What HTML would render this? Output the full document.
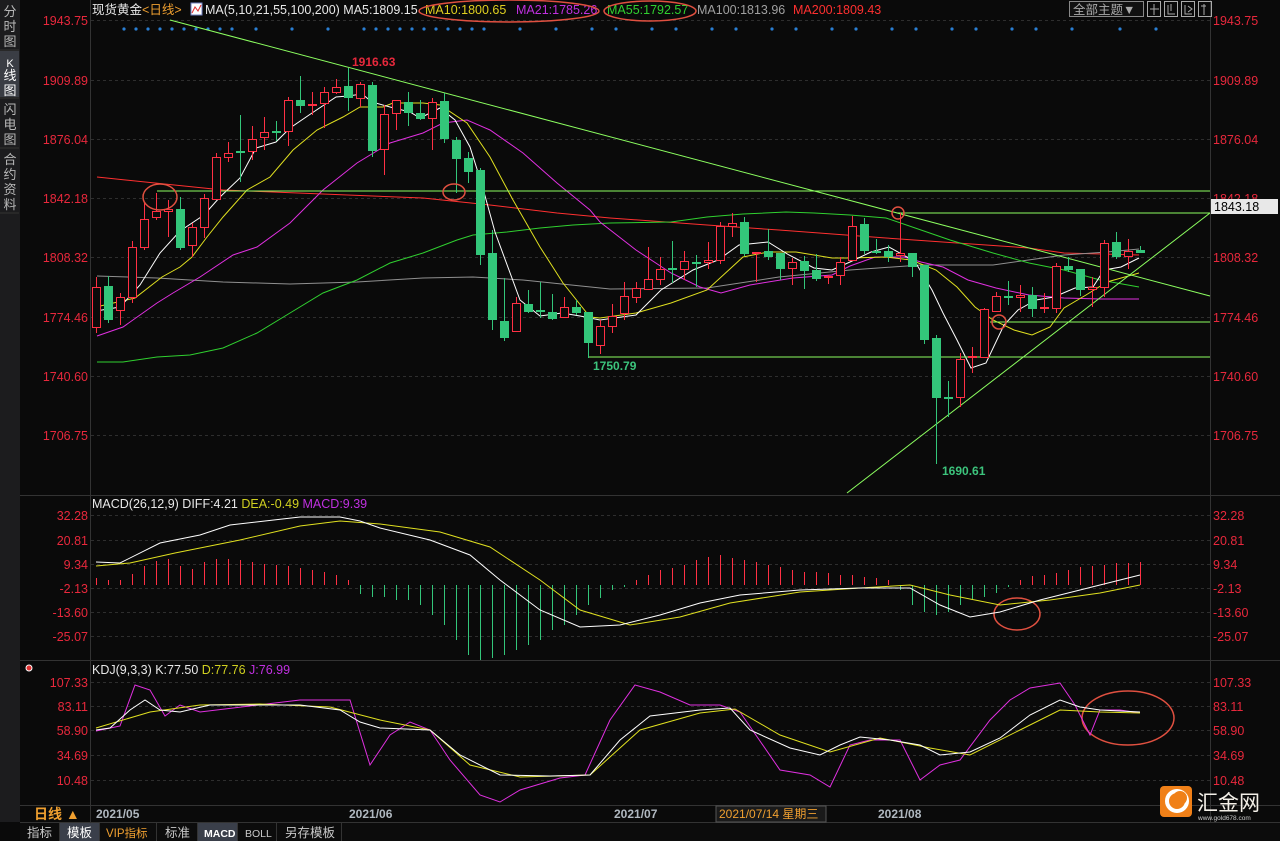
<!DOCTYPE html>
<html><head><meta charset="utf-8">
<style>
html,body{margin:0;padding:0;background:#0a0a0a;width:1280px;height:841px;overflow:hidden;font-family:"Liberation Sans","Noto Sans CJK SC",sans-serif}
svg{position:absolute;left:0;top:0}
text{font-family:"Liberation Sans","Noto Sans CJK SC",sans-serif}
</style></head><body>
<svg id="s" width="1280" height="841" viewBox="0 0 1280 841" xmlns="http://www.w3.org/2000/svg">
<rect width="1280" height="841" fill="#0a0a0a"/>
<rect x="0" y="0" width="20" height="822" fill="#1c1c1e"/>
<rect x="0" y="51" width="19" height="46" fill="#3a3d44"/>
<line x1="0" y1="50" x2="19" y2="50" stroke="#333"/>
<line x1="0" y1="98" x2="19" y2="98" stroke="#333"/>
<line x1="0" y1="148" x2="19" y2="148" stroke="#333"/>
<line x1="0" y1="213" x2="19" y2="213" stroke="#333"/>
<g fill="#b8b8b8" font-size="13" text-anchor="middle">
<text x="10" y="16">分</text><text x="10" y="31">时</text><text x="10" y="46">图</text>
<text x="10" y="67" fill="#fff" font-size="11">K</text><text x="10" y="80" fill="#fff">线</text><text x="10" y="95" fill="#fff">图</text>
<text x="10" y="114">闪</text><text x="10" y="129">电</text><text x="10" y="144">图</text>
<text x="10" y="164">合</text><text x="10" y="179">约</text><text x="10" y="194">资</text><text x="10" y="209">料</text>
</g>
<line x1="90.5" y1="0" x2="90.5" y2="822" stroke="#333"/>
<line x1="1210.5" y1="0" x2="1210.5" y2="822" stroke="#333"/>
<line x1="20" y1="495.5" x2="1280" y2="495.5" stroke="#333"/>
<line x1="20" y1="660.5" x2="1280" y2="660.5" stroke="#333"/>
<line x1="20" y1="805.5" x2="1280" y2="805.5" stroke="#333"/>
<line x1="20" y1="822.5" x2="1280" y2="822.5" stroke="#333"/>
<g id="grid" stroke="#2e2e2e" stroke-dasharray="3,3"></g>
<g fill="#e8283c" font-size="12.5" id="axl"></g>
<g font-size="12.5">
<text x="92" y="14" fill="#e8e8e8">现货黄金<tspan fill="#f0a030">&lt;日线&gt;</tspan></text>
<rect x="191" y="3" width="11" height="12" fill="#fff" stroke="#7080c0"/>
<polyline points="192,13 195,7 198,11 201,5" fill="none" stroke="#e03030"/>
<text x="205" y="14" fill="#e8e8e8">MA(5,10,21,55,100,200) MA5:1809.15</text>
<text x="425" y="14" fill="#e0d020">MA10:1800.65</text>
<text x="516" y="14" fill="#c030e0">MA21:1785.26</text>
<text x="607" y="14" fill="#30d030">MA55:1792.57</text>
<text x="697" y="14" fill="#a0a0a0">MA100:1813.96</text>
<text x="793" y="14" fill="#ff3030">MA200:1809.43</text>
</g>
<g fill="none" stroke="#e05040" stroke-width="1.5">
<ellipse cx="509" cy="11" rx="90" ry="11"/>
<ellipse cx="650" cy="11" rx="46" ry="10"/>
</g>
<rect x="1069.5" y="1.5" width="74" height="15" fill="#111" stroke="#888"/>
<text x="1073" y="14" fill="#aaa" font-size="12.5">全部主题▼</text>
<g fill="none" stroke="#aaa">
<rect x="1147.5" y="1.5" width="13" height="15"/><rect x="1164.5" y="1.5" width="13" height="15"/><rect x="1181.5" y="1.5" width="13" height="15"/><rect x="1198.5" y="1.5" width="13" height="15"/>
<path d="M1154 4v11M1150 9h9M1168 5v9h7M1171 4v7M1185 5v9h7M1188 6l4 3-4 3M1201 6h5M1204 4v11"/>
</g>
<g id="dots" fill="#2a7fd4"></g>
<g id="ma"></g>
<g id="trend" stroke="#8cff60" stroke-width="1" fill="none">
<line x1="170" y1="20" x2="1210" y2="296"/>
<line x1="847" y1="493" x2="1210" y2="213"/>
<line x1="157" y1="191" x2="1210" y2="191"/>
<line x1="897" y1="213" x2="1210" y2="213"/>
<line x1="990" y1="322" x2="1210" y2="322"/>
<line x1="588" y1="357" x2="1210" y2="357"/>
</g>
<g id="cdl"></g>
<g font-size="12" font-weight="bold">
<text x="352" y="66" fill="#e8283c">1916.63</text>
<text x="593" y="370" fill="#3cc47c">1750.79</text>
<text x="942" y="475" fill="#3cc47c">1690.61</text>
</g>
<rect x="1211" y="199" width="67" height="15" fill="#e8e8e8"/>
<text x="1214" y="211" fill="#000" font-size="12.5">1843.18</text>
<g fill="none" stroke="#e05040" stroke-width="1.5">
<ellipse cx="160" cy="197" rx="17" ry="13"/>
<ellipse cx="454" cy="192" rx="11" ry="8"/>
<circle cx="898" cy="213" r="6"/>
<circle cx="999" cy="322" r="7"/>
<ellipse cx="1017" cy="614" rx="23" ry="16"/>
<ellipse cx="1128" cy="718" rx="46" ry="27"/>
</g>
<g font-size="12.5">
<text x="92" y="508" fill="#e8e8e8">MACD(26,12,9) DIFF:4.21 <tspan fill="#d0d020">DEA:-0.49</tspan> <tspan fill="#c030e0">MACD:9.39</tspan></text>
<text x="92" y="674" fill="#e8e8e8">KDJ(9,3,3) K:77.50 <tspan fill="#d0d020">D:77.76</tspan> <tspan fill="#c030e0">J:76.99</tspan></text>
</g>
<circle cx="29" cy="668" r="3" fill="#e03030" stroke="#fff"/>
<g id="macd"></g>
<g id="kdj" fill="none"></g>
<g font-size="12" font-weight="bold" fill="#b0b8c0">
<text x="96" y="818">2021/05</text>
<text x="349" y="818">2021/06</text>
<text x="614" y="818">2021/07</text>
<text x="878" y="818">2021/08</text>
</g>
<rect x="716" y="806" width="110" height="16" fill="#1a1a1a" stroke="#555"/>
<text x="719" y="818" font-size="12" fill="#f0a030">2021/07/14 星期三</text>
<text x="34" y="819" font-size="14" fill="#f0a030" font-weight="bold">日线 ▲</text>
<rect x="20" y="823" width="1260" height="18" fill="#0c0c0c"/>
<rect x="60" y="823" width="39" height="18" fill="#3a3f4a"/>
<rect x="198" y="823" width="39" height="18" fill="#3a3f4a"/>
<g stroke="#333"><line x1="59.5" y1="823" x2="59.5" y2="841"/><line x1="99.5" y1="823" x2="99.5" y2="841"/><line x1="156.5" y1="823" x2="156.5" y2="841"/><line x1="197.5" y1="823" x2="197.5" y2="841"/><line x1="237.5" y1="823" x2="237.5" y2="841"/><line x1="276.5" y1="823" x2="276.5" y2="841"/><line x1="341.5" y1="823" x2="341.5" y2="841"/></g>
<g font-size="12.5" fill="#c8c8c8">
<text x="27" y="837">指标</text><text x="67" y="837" fill="#fff">模板</text>
<text x="106" y="837" fill="#f0a030" font-family="Liberation Mono,Noto Sans CJK SC,monospace" font-size="11.5">VIP指标</text>
<text x="165" y="837">标准</text>
<text x="204" y="837" fill="#fff" font-family="Liberation Mono,monospace" font-size="10.5" font-weight="bold">MACD</text>
<text x="245" y="837" font-family="Liberation Mono,monospace" font-size="10.5">BOLL</text>
<text x="285" y="837">另存模板</text>
</g>
<rect x="1160" y="786" width="32" height="31" rx="4" fill="#f08018"/>
<circle cx="1177" cy="801" r="10" fill="none" stroke="#fff" stroke-width="4"/>
<circle cx="1180" cy="798" r="7" fill="#f08018"/>
<text x="1197" y="810" font-size="21" fill="#f4f0e8">汇金网</text>
<text x="1198" y="820" font-size="6.5" fill="#ccc">www.gold678.com</text>
</svg>
<script>
var NS="http://www.w3.org/2000/svg";
function el(p,t,a){var e=document.createElementNS(NS,t);for(var k in a)e.setAttribute(k,a[k]);document.getElementById(p).appendChild(e);return e;}
var L=[[20,"1943.75"],[80,"1909.89"],[139,"1876.04"],[198,"1842.18"],[257,"1808.32"],[317,"1774.46"],[376,"1740.60"],[435,"1706.75"],
[515,"32.28"],[540,"20.81"],[564,"9.34"],[588,"-2.13"],[612,"-13.60"],[636,"-25.07"],
[682,"107.33"],[706,"83.11"],[730,"58.90"],[755,"34.69"],[780,"10.48"]];
L.forEach(function(v){
 el("grid","line",{x1:91,y1:v[0]+.5,x2:1210,y2:v[0]+.5});
 var t=el("axl","text",{x:88,y:v[0]+5,"text-anchor":"end"});t.textContent=v[1];
 if(v[1]!="1842.18"){var t2=el("axl","text",{x:1213,y:v[0]+5});t2.textContent=v[1];}
});
var t3=el("axl","text",{x:1213,y:203,fill:"#e8283c"});t3.textContent="1842.18";
[1,2,3,4,5,6,7,8,9,10,12,15,18,21,22,23,24,25,26,27,28,29,30,31,34,37,40,42,45,47,50,52,55,57,60,62,65,67,70,72,75,77,80,84,87].forEach(function(i){el("dots","circle",{cx:96+12*i+16,cy:29,r:1.6});});
function pl(pts,c,w){el("ma","polyline",{points:pts,stroke:c,"stroke-width":w||1,fill:"none"});}
pl("97,177 223,190 423,198 490,205 557,213 610,218 707,225 779,230 886,238 957,243 1029,248 1064,253 1139,255","#ff3030");
pl("97,276 157,278 223,282 290,284 357,282 423,278 473,277 523,280 610,289 707,288 779,277 850,270 921,265 993,265 1064,255 1107,252 1139,249","#909090");
pl("97,362 123,362 157,357 190,355 223,348 257,333 290,313 323,293 357,280 390,263 423,253 457,240 473,235 507,232 540,228 573,225 610,223 671,222 707,217 743,214 786,212 814,213 850,215 886,218 921,230 950,240 993,253 1029,263 1064,270 1100,280 1139,287","#30d030");
pl("97,336 123,327 157,303 173,293 200,277 233,255 257,247 290,223 323,190 357,163 390,143 423,133 443,123 467,120 490,130 523,153 557,183 590,210 600,222 636,250 671,273 700,287 721,293 750,285 793,278 832,275 850,266 875,257 904,257 921,262 943,267 968,280 996,288 1029,295 1064,298 1100,299 1139,299","#e030e0");
pl("96,307 135,298 162,277 180,267 192,257 207,237 223,217 247,190 270,177 293,150 317,130 343,117 360,107 383,107 393,103 423,103 440,105 467,123 490,157 513,200 540,247 563,283 590,317 600,318 636,313 671,303 707,290 743,257 768,252 796,252 832,258 850,258 886,257 911,260 936,270 957,287 975,307 993,320 1014,330 1032,335 1050,327 1064,308 1086,295 1107,282 1139,273","#e0e020");
pl("96,311 120,307 140,285 160,253 180,231 204,215 220,197 240,178 256,148 276,142 290,128 312,113 336,97 348,96 362,94 372,102 390,107 410,112 420,118 440,108 455,120 470,147 482,185 495,232 520,300 540,316 562,313 580,316 600,320 636,315 661,290 693,270 718,260 739,245 768,242 789,255 814,268 832,270 850,262 871,252 889,247 907,257 914,260 932,290 943,313 957,340 971,368 986,363 1004,325 1018,310 1036,300 1054,297 1075,288 1093,287 1104,270 1121,267 1139,258","#ffffff");
var C=[["r",287,327,277,333],["g",286,319,276,323],["r",297,310,293,325],["r",247,297,241,303],["r",219,247,203,250],["r",211,217,193,220],["r",209,211,200,237],["g",209,247,197,250],["r",227,245,223,257],["r",198,227,194,238],
["r",157,199,153,200],["r",153,157,142,162],["g",151,152,115,182],["r",139,151,126,160],["r",132,137,117,150],["g",131,132,121,141],["r",100,131,97,146],["g",100,105,76,113],["r",104,105,92,115],["r",92,103,87,128],
["r",87,92,79,94],["g",86,97,68,111],["r",84,98,82,107],["g",85,150,82,157],["r",114,149,105,175],["r",100,113,100,130],["g",102,112,92,126],["g",113,118,100,120],["r",102,118,98,150],["g",101,138,93,143],
["g",140,158,137,193],["g",158,171,152,183],["g",170,254,168,265],["g",253,319,230,330],["g",321,337,278,341],["r",303,331,297,331],["g",304,311,290,313],["g",310,311,282,318],["g",312,318,294,320],["r",307,317,297,318],
["g",307,312,300,315],["g",312,342,312,358],["r",326,345,320,354],["r",316,326,304,333],["r",296,313,282,320],["r",288,297,282,303],["r",279,289,247,290],["r",269,279,257,285],["g",268,269,241,283],["r",261,269,251,280],
["g",262,263,255,287],["r",260,262,242,269],["r",226,260,222,264],["r",223,226,213,237],["g",222,253,217,256],["r",252,253,252,282],["g",251,256,229,260],["g",253,268,253,280],["r",262,268,258,285],["g",261,270,256,289],
["g",270,278,254,281],["r",276,277,275,284],["r",262,275,257,285],["r",226,260,216,260],["g",224,250,218,254],["g",251,252,239,254],["g",251,256,245,262],["r",253,255,213,262],["g",253,266,253,277],["g",265,339,265,344],
["g",338,397,335,464],["g",397,398,381,417],["r",359,397,353,407],["r",356,357,347,373],["r",309,357,308,357],["r",296,311,292,312],["g",296,297,281,305],["r",295,297,285,312],["g",295,308,287,317],["r",307,308,293,313],
["r",266,308,263,313],["g",266,269,257,272],["g",269,289,269,296],["r",287,289,277,307],["r",243,287,240,297],["g",242,256,232,259],["r",251,256,239,269],["g",250,252,246,252]];
C.forEach(function(c,i){var x=96+12*i,col=c[0]=="r"?"#ff3044":"#33c67a";
 el("cdl","line",{x1:x+.5,y1:c[3],x2:x+.5,y2:c[4],stroke:col});
 var h=Math.max(1,c[2]-c[1]);
 if(c[0]=="r")el("cdl","rect",{x:x-3.5,y:c[1]+.5,width:8,height:h,fill:"#0a0a0a",stroke:col});
 else el("cdl","rect",{x:x-4,y:c[1],width:9,height:h+1,fill:col});
});
var H=[578,580,580,574,566,561,559,566,569,562,559,559,560,562,564,565,566,568,570,572,575,580,594,597,597,600,600,605,615,625,640,655,660,658,655,650,645,640,630,625,615,605,598,590,587,580,575,570,568,565,560,557,555,558,560,562,565,567,570,572,572,573,575,575,577,578,580,590,605,612,615,612,605,600,597,593,587,580,576,575,573,570,567,566,565,563,563,562];
H.forEach(function(v,i){var x=96+12*i+.5;el("macd","line",{x1:x,y1:585,x2:x,y2:v,stroke:v<585?"#ff3044":"#33c67a"});});
el("macd","polyline",{points:"96,566 130,563 175,553 240,540 300,526 340,521 380,524 440,532 490,547 540,580 580,610 630,625 680,617 730,603 800,592 860,588 910,585 950,595 1000,605 1050,600 1100,593 1140,585",fill:"none",stroke:"#e0e020"});
el("macd","polyline",{points:"96,562 120,563 160,543 200,535 230,525 300,517 340,517 360,521 380,528 430,540 470,555 500,580 540,610 580,627 620,625 660,615 700,603 740,595 800,590 860,588 910,588 940,605 970,617 1000,612 1040,600 1080,590 1140,575",fill:"none",stroke:"#ffffff"});
el("kdj","polyline",{points:"96,731 120,726 135,685 150,690 165,716 180,705 200,712 300,700 350,700 370,765 390,735 410,722 430,730 450,760 480,795 500,802 520,790 560,778 585,775 610,720 635,685 660,692 690,705 720,705 740,712 780,770 810,775 830,787 850,745 870,740 900,740 920,780 940,765 960,760 990,720 1010,700 1030,688 1060,683 1075,705 1090,735 1100,710 1120,710 1140,713",stroke:"#e030e0"});
el("kdj","polyline",{points:"96,728 150,712 200,705 260,704 330,707 380,720 430,730 470,765 520,777 590,775 640,730 700,713 735,709 780,735 830,752 880,738 930,748 970,755 1020,730 1060,710 1100,712 1140,713",stroke:"#e0e020"});
el("kdj","polyline",{points:"96,730 110,728 130,710 145,700 160,710 180,712 210,705 250,705 300,705 340,710 360,722 380,728 430,730 460,755 500,775 550,776 590,775 620,740 650,716 700,710 730,708 750,730 790,748 820,755 840,745 860,737 890,740 920,745 940,755 970,752 1000,738 1030,715 1060,700 1080,707 1100,710 1140,712",stroke:"#ffffff"});
</script>
</body></html>
